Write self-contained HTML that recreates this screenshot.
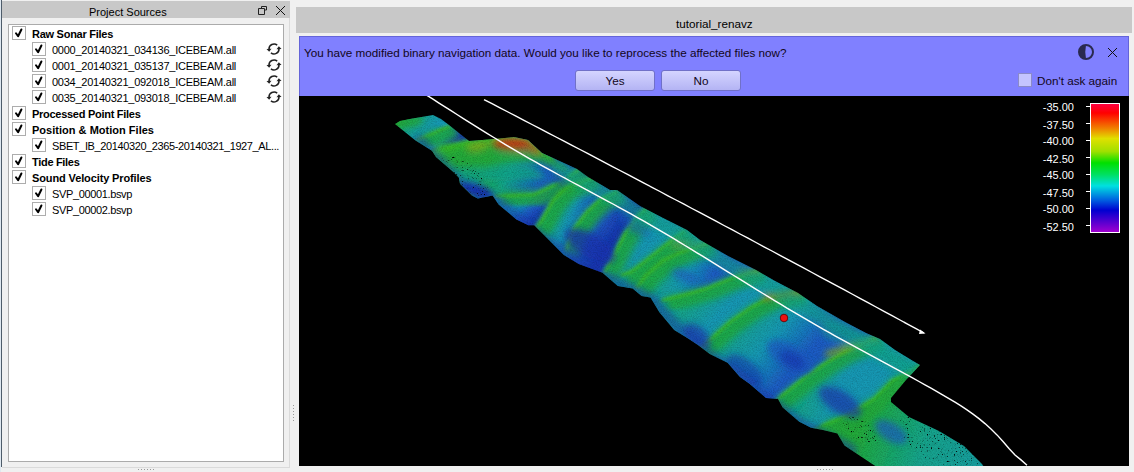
<!DOCTYPE html>
<html><head><meta charset="utf-8">
<style>
*{margin:0;padding:0;box-sizing:border-box}
html,body{width:1134px;height:472px;overflow:hidden;background:#f0f0f0;font-family:"Liberation Sans",sans-serif;font-size:11px;color:#000}
.a{position:absolute}
.t{position:absolute;white-space:nowrap;line-height:12px}
.cb{position:absolute;width:14px;height:14px;border:1px solid #adadad;background:#fff}
.cb svg{position:absolute;left:1px;top:1px}
.b{font-weight:bold}
</style></head><body>
<!-- left edge -->
<div class="a" style="left:0;top:0;width:1px;height:472px;background:#dfe8f0"></div>
<div class="a" style="left:1px;top:0;width:1px;height:467px;background:#4e5c6a"></div>
<!-- left panel header -->
<div class="a" style="left:2px;top:1px;width:288px;height:17px;background:#c8c8c8"></div>
<div class="t" style="left:89px;top:6px;font-size:11px">Project Sources</div>
<svg class="a" style="left:257px;top:5px" width="12" height="11" viewBox="0 0 12 11">
<path d="M1.5 3.5h6v6h-6z M4.5 3.5v-2h5v3.5h-2" fill="none" stroke="#222" stroke-width="1"/></svg>
<svg class="a" style="left:275px;top:5px" width="11" height="11" viewBox="0 0 11 11">
<path d="M1 1L10 10M10 1L1 10" stroke="#111" stroke-width="1"/></svg>
<!-- tree box -->
<div class="a" style="left:8px;top:24px;width:276px;height:438px;background:#fff;border:1px solid #ababab"></div>
<div class="a" style="left:289px;top:18px;width:1px;height:450px;background:#dadada"></div>
<div class="a" style="left:2px;top:467px;width:288px;height:1px;background:#dadada"></div>
<svg width="0" height="0" style="position:absolute"><defs><symbol id="sync" viewBox="0 0 16 16"><g stroke="#222" stroke-width="1.5" fill="none"><path d="M11.21 4.17A5.0 5.0 0 0 0 3.01 8.26"/><path d="M4.92 11.94A5.0 5.0 0 0 0 12.99 7.74"/></g><g fill="#222"><path d="M3.14 10.86L0.49 7.99L5.48 7.73z"/><path d="M12.86 5.14L15.51 8.01L10.52 8.27z"/></g></symbol></defs></svg>
<div class="cb" style="left:12px;top:26px"><svg width="11" height="11" viewBox="0 0 11 11"><path d="M2 5.3L4.1 8.3L7.4 1.5" fill="none" stroke="#000" stroke-width="2" stroke-linecap="round" stroke-linejoin="round"/></svg></div>
<div class="t b" style="left:32px;top:28px;letter-spacing:-0.266px">Raw Sonar Files</div>
<div class="cb" style="left:32px;top:42px"><svg width="11" height="11" viewBox="0 0 11 11"><path d="M2 5.3L4.1 8.3L7.4 1.5" fill="none" stroke="#000" stroke-width="2" stroke-linecap="round" stroke-linejoin="round"/></svg></div>
<div class="t" style="left:52px;top:44px;letter-spacing:-0.251px">0000_20140321_034136_ICEBEAM.all</div>
<svg class="a" style="left:266px;top:41px" width="16" height="16" viewBox="0 0 16 16"><use href="#sync"/></svg>
<div class="cb" style="left:32px;top:58px"><svg width="11" height="11" viewBox="0 0 11 11"><path d="M2 5.3L4.1 8.3L7.4 1.5" fill="none" stroke="#000" stroke-width="2" stroke-linecap="round" stroke-linejoin="round"/></svg></div>
<div class="t" style="left:52px;top:60px;letter-spacing:-0.251px">0001_20140321_035137_ICEBEAM.all</div>
<svg class="a" style="left:266px;top:57px" width="16" height="16" viewBox="0 0 16 16"><use href="#sync"/></svg>
<div class="cb" style="left:32px;top:74px"><svg width="11" height="11" viewBox="0 0 11 11"><path d="M2 5.3L4.1 8.3L7.4 1.5" fill="none" stroke="#000" stroke-width="2" stroke-linecap="round" stroke-linejoin="round"/></svg></div>
<div class="t" style="left:52px;top:76px;letter-spacing:-0.251px">0034_20140321_092018_ICEBEAM.all</div>
<svg class="a" style="left:266px;top:73px" width="16" height="16" viewBox="0 0 16 16"><use href="#sync"/></svg>
<div class="cb" style="left:32px;top:90px"><svg width="11" height="11" viewBox="0 0 11 11"><path d="M2 5.3L4.1 8.3L7.4 1.5" fill="none" stroke="#000" stroke-width="2" stroke-linecap="round" stroke-linejoin="round"/></svg></div>
<div class="t" style="left:52px;top:92px;letter-spacing:-0.251px">0035_20140321_093018_ICEBEAM.all</div>
<svg class="a" style="left:266px;top:89px" width="16" height="16" viewBox="0 0 16 16"><use href="#sync"/></svg>
<div class="cb" style="left:12px;top:106px"><svg width="11" height="11" viewBox="0 0 11 11"><path d="M2 5.3L4.1 8.3L7.4 1.5" fill="none" stroke="#000" stroke-width="2" stroke-linecap="round" stroke-linejoin="round"/></svg></div>
<div class="t b" style="left:32px;top:108px;letter-spacing:-0.278px">Processed Point Files</div>
<div class="cb" style="left:12px;top:122px"><svg width="11" height="11" viewBox="0 0 11 11"><path d="M2 5.3L4.1 8.3L7.4 1.5" fill="none" stroke="#000" stroke-width="2" stroke-linecap="round" stroke-linejoin="round"/></svg></div>
<div class="t b" style="left:32px;top:124px;letter-spacing:0.017px">Position &amp; Motion Files</div>
<div class="cb" style="left:32px;top:138px"><svg width="11" height="11" viewBox="0 0 11 11"><path d="M2 5.3L4.1 8.3L7.4 1.5" fill="none" stroke="#000" stroke-width="2" stroke-linecap="round" stroke-linejoin="round"/></svg></div>
<div class="t" style="left:52px;top:140px;letter-spacing:-0.386px">SBET_IB_20140320_2365-20140321_1927_AL...</div>
<div class="cb" style="left:12px;top:154px"><svg width="11" height="11" viewBox="0 0 11 11"><path d="M2 5.3L4.1 8.3L7.4 1.5" fill="none" stroke="#000" stroke-width="2" stroke-linecap="round" stroke-linejoin="round"/></svg></div>
<div class="t b" style="left:32px;top:156px;letter-spacing:-0.305px">Tide Files</div>
<div class="cb" style="left:12px;top:170px"><svg width="11" height="11" viewBox="0 0 11 11"><path d="M2 5.3L4.1 8.3L7.4 1.5" fill="none" stroke="#000" stroke-width="2" stroke-linecap="round" stroke-linejoin="round"/></svg></div>
<div class="t b" style="left:32px;top:172px;letter-spacing:-0.120px">Sound Velocity Profiles</div>
<div class="cb" style="left:32px;top:186px"><svg width="11" height="11" viewBox="0 0 11 11"><path d="M2 5.3L4.1 8.3L7.4 1.5" fill="none" stroke="#000" stroke-width="2" stroke-linecap="round" stroke-linejoin="round"/></svg></div>
<div class="t" style="left:52px;top:188px;letter-spacing:-0.358px">SVP_00001.bsvp</div>
<div class="cb" style="left:32px;top:202px"><svg width="11" height="11" viewBox="0 0 11 11"><path d="M2 5.3L4.1 8.3L7.4 1.5" fill="none" stroke="#000" stroke-width="2" stroke-linecap="round" stroke-linejoin="round"/></svg></div>
<div class="t" style="left:52px;top:204px;letter-spacing:-0.358px">SVP_00002.bsvp</div>

<!-- splitter dots -->
<svg class="a" style="left:137px;top:469px" width="20" height="2"><g fill="#9a9a9a"><rect x="1" y="0" width="1" height="1"/><rect x="4" y="0" width="1" height="1"/><rect x="7" y="0" width="1" height="1"/><rect x="10" y="0" width="1" height="1"/><rect x="13" y="0" width="1" height="1"/><rect x="16" y="0" width="1" height="1"/></g></svg>
<svg class="a" style="left:293px;top:404px" width="2" height="20"><g fill="#9a9a9a"><rect x="0" y="1" width="1" height="1"/><rect x="0" y="4" width="1" height="1"/><rect x="0" y="7" width="1" height="1"/><rect x="0" y="10" width="1" height="1"/><rect x="0" y="13" width="1" height="1"/><rect x="0" y="16" width="1" height="1"/></g></svg>
<svg class="a" style="left:816px;top:469px" width="20" height="2"><g fill="#9a9a9a"><rect x="1" y="0" width="1" height="1"/><rect x="4" y="0" width="1" height="1"/><rect x="7" y="0" width="1" height="1"/><rect x="10" y="0" width="1" height="1"/><rect x="13" y="0" width="1" height="1"/><rect x="16" y="0" width="1" height="1"/></g></svg>

<!-- right view header -->
<div class="a" style="left:296px;top:7px;width:836px;height:26px;background:#c8c8c8"></div>
<div class="t" style="left:676px;top:18px;font-size:11.7px">tutorial_renavz</div>

<!-- viewport -->
<div class="a" style="left:299px;top:96px;width:830px;height:370px;background:#000;overflow:hidden" id="vp"></div>
<svg class="a" style="left:299px;top:96px" width="830" height="370" viewBox="299 96 830 370">
<defs><clipPath id="sw"><polygon points="395,124 400,121 410,119 433,115 441,119 449,125 469,141 482,140 500,138.6 514,137 528,140 542,153 577,169 588,177 610,190 617,190 640,206 663,218 687,230 700,240 728,256 756,270 775,281 798,293 817,306 845,322 866,333 880,339 895,350 913,361 920,365 906,380 891,398 891,402 909,417 939,431 964,446 982,464 984,467 877,467 873,464.5 858.7,455 844.5,445.5 837.3,433.6 823,430 811,427.7 799.3,421.7 782.7,407.5 778,399 766,398 749.5,383.7 740,377 727.6,362.8 709.8,353.9 698,345 689,339 674.2,330 659.4,312.3 650.5,297.5 641.6,296 632.6,288.6 617.8,286 602.5,272.8 578.7,263.9 563.9,255 549,240.1 534.2,225.3 528.3,225.3 516.4,219.4 498.6,204.5 492.6,195.6 477.8,198.6 471.9,195.6 460,183.7 458.8,177.4 453.7,172.3 436,157 432,150.7 415.5,140.5"/></clipPath>
<filter id="bl" x="-5%" y="-5%" width="110%" height="110%"><feGaussianBlur stdDeviation="1.5"/></filter>
<filter id="bl2" x="-5%" y="-5%" width="110%" height="110%"><feGaussianBlur stdDeviation="3"/></filter>
<filter id="bl3" x="-20%" y="-20%" width="140%" height="140%"><feGaussianBlur stdDeviation="3"/></filter>
<linearGradient id="gA0" gradientUnits="userSpaceOnUse" x1="406.5" y1="112.5" x2="432.0" y2="132.5"><stop offset="0" stop-color="#22aa3a"/><stop offset="0.3" stop-color="#12a48c"/><stop offset="1" stop-color="#1498b4"/></linearGradient>
<linearGradient id="gRA" gradientUnits="userSpaceOnUse" x1="432.0" y1="132.5" x2="451.4" y2="145.8"><stop offset="0" stop-color="#12a48c"/><stop offset="0.5" stop-color="#1498b4"/><stop offset="1" stop-color="#1836b0"/></linearGradient>
<linearGradient id="gRB" gradientUnits="userSpaceOnUse" x1="451.4" y1="145.8" x2="541.0" y2="185.0"><stop offset="0" stop-color="#22aa3a"/><stop offset="0.4" stop-color="#22aa3a"/><stop offset="0.65" stop-color="#12a48c"/><stop offset="1" stop-color="#1c5cc4"/></linearGradient>
<linearGradient id="gR3" gradientUnits="userSpaceOnUse" x1="541.0" y1="185.0" x2="556.6" y2="202.6"><stop offset="0" stop-color="#1498b4"/><stop offset="0.5" stop-color="#1c5cc4"/><stop offset="1" stop-color="#1836b0"/></linearGradient>
<linearGradient id="gR4" gradientUnits="userSpaceOnUse" x1="556.6" y1="202.6" x2="588.0" y2="215.6"><stop offset="0" stop-color="#12a48c"/><stop offset="0.5" stop-color="#1498b4"/><stop offset="1" stop-color="#1c5cc4"/></linearGradient>
<linearGradient id="gR5" gradientUnits="userSpaceOnUse" x1="588.0" y1="215.6" x2="621.5" y2="241.0"><stop offset="0" stop-color="#12a48c"/><stop offset="0.3" stop-color="#1c5cc4"/><stop offset="0.8" stop-color="#1836b0"/></linearGradient>
<linearGradient id="gR6" gradientUnits="userSpaceOnUse" x1="621.5" y1="241.0" x2="650.5" y2="254.7"><stop offset="0" stop-color="#12a48c"/><stop offset="0.4" stop-color="#1498b4"/><stop offset="1" stop-color="#1498b4"/></linearGradient>
<linearGradient id="gR7" gradientUnits="userSpaceOnUse" x1="650.5" y1="254.7" x2="665.6" y2="263.6"><stop offset="0" stop-color="#12a48c"/><stop offset="0.4" stop-color="#12a48c"/><stop offset="1" stop-color="#1498b4"/></linearGradient>
<linearGradient id="gR8" gradientUnits="userSpaceOnUse" x1="665.6" y1="263.6" x2="707.5" y2="285.8"><stop offset="0" stop-color="#12a48c"/><stop offset="0.5" stop-color="#1498b4"/><stop offset="1" stop-color="#1c5cc4"/></linearGradient>
<linearGradient id="gR9" gradientUnits="userSpaceOnUse" x1="707.5" y1="285.8" x2="741.8" y2="317.9"><stop offset="0" stop-color="#12a48c"/><stop offset="0.6" stop-color="#1498b4"/><stop offset="1" stop-color="#1498b4"/></linearGradient>
<linearGradient id="gR10" gradientUnits="userSpaceOnUse" x1="741.8" y1="317.9" x2="809.3" y2="378.0"><stop offset="0" stop-color="#12a48c"/><stop offset="0.4" stop-color="#1498b4"/><stop offset="0.8" stop-color="#1c5cc4"/></linearGradient>
<linearGradient id="gR11" gradientUnits="userSpaceOnUse" x1="809.3" y1="378.0" x2="869.8" y2="396.6"><stop offset="0" stop-color="#12a48c"/><stop offset="0.5" stop-color="#1498b4"/><stop offset="1" stop-color="#1498b4"/></linearGradient>
<linearGradient id="gR12" gradientUnits="userSpaceOnUse" x1="869.8" y1="396.6" x2="1050.0" y2="460.0"><stop offset="0" stop-color="#22aa3a"/><stop offset="0.35" stop-color="#12a48c"/><stop offset="1" stop-color="#1498b4"/></linearGradient>
<filter id="noise" x="380" y="100" width="620" height="370" filterUnits="userSpaceOnUse"><feTurbulence type="fractalNoise" baseFrequency="0.8" numOctaves="2" seed="7" result="n"/><feColorMatrix in="n" type="matrix" values="0 0 0 0 0  0 0 0 0 0  0 0 0 0 0  -1.2 0 0 0 0.75"/></filter>
<filter id="speck" x="380" y="100" width="620" height="370" filterUnits="userSpaceOnUse"><feTurbulence type="fractalNoise" baseFrequency="0.7" numOctaves="1" seed="11" result="n"/><feColorMatrix in="n" type="matrix" values="0 0 0 0 0  0 0 0 0 0  0 0 0 0 0  -9 0 0 0 3.2"/></filter>
<clipPath id="spk"><ellipse cx="462" cy="178" rx="30" ry="16" transform="rotate(35 462 178)"/><ellipse cx="940" cy="446" rx="48" ry="18" transform="rotate(32 940 446)"/><ellipse cx="860" cy="430" rx="20" ry="10" transform="rotate(32 860 430)"/></clipPath>
</defs>
<g clip-path="url(#sw)">
<g filter="url(#bl)"><polygon points="469.2,82.9 433.0,100.0 380.0,125.0 343.8,142.1 378.4,156.1 415.0,140.0 449.0,125.0 485.6,108.9" fill="url(#gA0)"/>
<polygon points="485.6,108.9 449.0,125.0 415.0,140.0 378.4,156.1 393.6,160.2 432.4,150.5 470.5,141.0 509.3,131.3" fill="url(#gRA)"/>
<polygon points="509.3,131.3 470.5,141.0 432.4,150.5 393.6,160.2 453.0,198.0 493.0,196.0 533.0,194.0 560.5,181.0 577.5,169.0 610.2,145.9" fill="url(#gRB)"/>
<polygon points="610.2,145.9 577.5,169.0 560.5,181.0 533.0,194.0 493.0,196.0 453.0,198.0 509.5,262.3 533.0,230.0 541.0,219.0 552.0,200.0 565.0,187.0 592.0,177.0 629.5,163.1" fill="url(#gR3)"/>
<polygon points="629.5,163.1 592.0,177.0 565.0,187.0 552.0,200.0 541.0,219.0 533.0,230.0 509.5,262.3 551.3,287.6 565.0,250.0 573.0,228.0 586.0,211.0 600.0,198.0 616.0,191.0 652.6,175.0" fill="url(#gR4)"/>
<polygon points="652.6,175.0 616.0,191.0 600.0,198.0 586.0,211.0 573.0,228.0 565.0,250.0 551.3,287.6 581.6,305.8 603.0,272.0 608.7,263.0 615.0,250.5 623.6,233.6 634.0,218.7 644.7,208.0 673.0,179.7" fill="url(#gR5)"/>
<polygon points="673.0,179.7 644.7,208.0 634.0,218.7 623.6,233.6 615.0,250.5 608.7,263.0 603.0,272.0 581.6,305.8 582.8,289.7 620.0,275.0 630.6,270.8 649.7,256.0 668.7,241.0 683.6,230.6 716.4,207.7" fill="url(#gR6)"/>
<polygon points="716.4,207.7 683.6,230.6 668.7,241.0 649.7,256.0 630.6,270.8 620.0,275.0 582.8,289.7 610.6,319.7 635.0,288.0 645.0,275.0 662.0,260.0 679.0,252.0 707.0,243.0 745.1,230.8" fill="url(#gR7)"/>
<polygon points="745.1,230.8 707.0,243.0 679.0,252.0 662.0,260.0 645.0,275.0 635.0,288.0 610.6,319.7 621.2,309.9 660.0,300.0 683.6,294.0 705.0,288.0 732.0,277.0 757.0,270.0 795.5,259.2" fill="url(#gR8)"/>
<polygon points="795.5,259.2 757.0,270.0 732.0,277.0 705.0,288.0 683.6,294.0 660.0,300.0 621.2,309.9 662.4,379.1 692.7,353.0 709.7,338.4 728.7,321.4 750.0,306.6 771.0,296.0 798.6,292.0 838.2,286.3" fill="url(#gR9)"/>
<polygon points="838.2,286.3 798.6,292.0 771.0,296.0 750.0,306.6 728.7,321.4 709.7,338.4 692.7,353.0 662.4,379.1 751.3,457.2 766.0,420.0 772.7,403.0 781.0,394.7 802.4,377.8 823.6,363.0 844.7,350.3 874.4,337.5 911.1,321.7" fill="url(#gR10)"/>
<polygon points="911.1,321.7 874.4,337.5 844.7,350.3 823.6,363.0 802.4,377.8 781.0,394.7 772.7,403.0 766.0,420.0 751.3,457.2 782.9,439.9 820.0,425.0 845.0,415.0 873.0,398.0 891.0,380.0 920.0,365.0 955.5,346.6" fill="url(#gR11)"/>
<polygon points="955.5,346.6 920.0,365.0 891.0,380.0 873.0,398.0 845.0,415.0 820.0,425.0 782.9,439.9 968.8,525.0 1000.0,500.0 1100.0,420.0 1131.2,395.0" fill="url(#gR12)"/>
<polyline points="456,129 422,144" fill="none" stroke="#22aa3a" stroke-width="16" stroke-linejoin="round" opacity="0.8" filter="url(#bl3)"/>
<polyline points="450,125.5 416,140.5" fill="none" stroke="#34b82c" stroke-width="3.5" stroke-linejoin="round"/>
<polyline points="477.5,145 439.4,154.5" fill="none" stroke="#22aa3a" stroke-width="16" stroke-linejoin="round" opacity="0.8" filter="url(#bl3)"/>
<polyline points="471.5,141.5 433.4,151.0" fill="none" stroke="#34b82c" stroke-width="3.5" stroke-linejoin="round"/>
<polyline points="584.5,173 567.5,185 540,198 500,200" fill="none" stroke="#22aa3a" stroke-width="16" stroke-linejoin="round" opacity="0.8" filter="url(#bl3)"/>
<polyline points="578.5,169.5 561.5,181.5 534,194.5 494,196.5" fill="none" stroke="#34b82c" stroke-width="3.5" stroke-linejoin="round"/>
<polyline points="599,181 572,191 559,204 548,223 540,234" fill="none" stroke="#22aa3a" stroke-width="16" stroke-linejoin="round" opacity="0.8" filter="url(#bl3)"/>
<polyline points="593,177.5 566,187.5 553,200.5 542,219.5 534,230.5" fill="none" stroke="#34b82c" stroke-width="3.5" stroke-linejoin="round"/>
<polyline points="623,195 607,202 593,215 580,232 572,254" fill="none" stroke="#22aa3a" stroke-width="16" stroke-linejoin="round" opacity="0.8" filter="url(#bl3)"/>
<polyline points="617,191.5 601,198.5 587,211.5 574,228.5 566,250.5" fill="none" stroke="#34b82c" stroke-width="3.5" stroke-linejoin="round"/>
<polyline points="651.7,212 641,222.7 630.6,237.6 622,254.5 615.7,267 610,276" fill="none" stroke="#22aa3a" stroke-width="16" stroke-linejoin="round" opacity="0.8" filter="url(#bl3)"/>
<polyline points="645.7,208.5 635,219.2 624.6,234.1 616,251.0 609.7,263.5 604,272.5" fill="none" stroke="#34b82c" stroke-width="3.5" stroke-linejoin="round"/>
<polyline points="690.6,234.6 675.7,245 656.7,260 637.6,274.8 627,279" fill="none" stroke="#22aa3a" stroke-width="16" stroke-linejoin="round" opacity="0.8" filter="url(#bl3)"/>
<polyline points="684.6,231.1 669.7,241.5 650.7,256.5 631.6,271.3 621,275.5" fill="none" stroke="#34b82c" stroke-width="3.5" stroke-linejoin="round"/>
<polyline points="714,247 686,256 669,264 652,279 642,292" fill="none" stroke="#22aa3a" stroke-width="16" stroke-linejoin="round" opacity="0.8" filter="url(#bl3)"/>
<polyline points="708,243.5 680,252.5 663,260.5 646,275.5 636,288.5" fill="none" stroke="#34b82c" stroke-width="3.5" stroke-linejoin="round"/>
<polyline points="764,274 739,281 712,292 690.6,298 667,304" fill="none" stroke="#22aa3a" stroke-width="16" stroke-linejoin="round" opacity="0.8" filter="url(#bl3)"/>
<polyline points="758,270.5 733,277.5 706,288.5 684.6,294.5 661,300.5" fill="none" stroke="#34b82c" stroke-width="3.5" stroke-linejoin="round"/>
<polyline points="805.6,296 778,300 757,310.6 735.7,325.4 716.7,342.4 699.7,357" fill="none" stroke="#22aa3a" stroke-width="16" stroke-linejoin="round" opacity="0.8" filter="url(#bl3)"/>
<polyline points="799.6,292.5 772,296.5 751,307.1 729.7,321.9 710.7,338.9 693.7,353.5" fill="none" stroke="#34b82c" stroke-width="3.5" stroke-linejoin="round"/>
<polyline points="881.4,341.5 851.7,354.3 830.6,367 809.4,381.8 788,398.7 779.7,407 773,424" fill="none" stroke="#22aa3a" stroke-width="16" stroke-linejoin="round" opacity="0.8" filter="url(#bl3)"/>
<polyline points="875.4,338.0 845.7,350.8 824.6,363.5 803.4,378.3 782,395.2 773.7,403.5 767,420.5" fill="none" stroke="#34b82c" stroke-width="3.5" stroke-linejoin="round"/>
<polyline points="927,369 898,384 880,402 852,419 827,429" fill="none" stroke="#22aa3a" stroke-width="16" stroke-linejoin="round" opacity="0.8" filter="url(#bl3)"/>
<polyline points="921,365.5 892,380.5 874,398.5 846,415.5 821,425.5" fill="none" stroke="#34b82c" stroke-width="3.5" stroke-linejoin="round"/></g>
<g filter="url(#bl2)"><polyline points="432,152 470,143 500,140 526,139 534,146 552,156" fill="none" stroke="#34b82c" stroke-width="7" stroke-linecap="round" stroke-linejoin="round" opacity="1"/>
<polyline points="436,160 540,157 565,168" fill="none" stroke="#22aa3a" stroke-width="8" stroke-linecap="round" stroke-linejoin="round" opacity="0.9"/>
<ellipse cx="512" cy="143" rx="20" ry="5" transform="rotate(0 512 143)" fill="#c02a12" opacity="1"/>
<ellipse cx="514" cy="149" rx="20" ry="3" transform="rotate(5 514 149)" fill="#aa6c18" opacity="0.8"/>
<ellipse cx="478" cy="147" rx="12" ry="4" transform="rotate(-10 478 147)" fill="#88aa18" opacity="0.8"/>
<ellipse cx="534" cy="149" rx="8" ry="4" transform="rotate(35 534 149)" fill="#aa6c18" opacity="0.9"/>
<ellipse cx="410" cy="122" rx="14" ry="5" transform="rotate(-12 410 122)" fill="#22aa3a" opacity="0.9"/>
<polygon points="445,168 530,166 548,178 460,184" fill="#12a48c" opacity="0.8"/>
<ellipse cx="476" cy="190" rx="18" ry="7" transform="rotate(20 476 190)" fill="#1836b0" opacity="1"/>
<ellipse cx="560" cy="178" rx="9" ry="5" transform="rotate(30 560 178)" fill="#1836b0" opacity="0.9"/>
<ellipse cx="590" cy="246" rx="28" ry="12" transform="rotate(30 590 246)" fill="#1836b0" opacity="0.8"/>
<polyline points="673,246 705,243" fill="none" stroke="#88aa18" stroke-width="4" stroke-linecap="round" stroke-linejoin="round" opacity="0.7"/>
<polyline points="740,272 757,270" fill="none" stroke="#aa6c18" stroke-width="4" stroke-linecap="round" stroke-linejoin="round" opacity="0.6"/>
<polyline points="765,298 798,292" fill="none" stroke="#aa6c18" stroke-width="5" stroke-linecap="round" stroke-linejoin="round" opacity="0.8"/>
<polyline points="828,354 874,339" fill="none" stroke="#88aa18" stroke-width="6" stroke-linecap="round" stroke-linejoin="round" opacity="0.85"/>
<ellipse cx="635" cy="225" rx="18" ry="8" transform="rotate(32 635 225)" fill="#1c5cc4" opacity="0.5"/>
<ellipse cx="685" cy="276" rx="14" ry="6" transform="rotate(20 685 276)" fill="#1c5cc4" opacity="0.6"/>
<ellipse cx="697" cy="336" rx="16" ry="9" transform="rotate(40 697 336)" fill="#1836b0" opacity="0.7"/>
<ellipse cx="790" cy="357" rx="26" ry="12" transform="rotate(32 790 357)" fill="#1c5cc4" opacity="0.75"/>
<ellipse cx="745" cy="370" rx="22" ry="10" transform="rotate(40 745 370)" fill="#1836b0" opacity="0.6"/>
<ellipse cx="792" cy="360" rx="14" ry="8" transform="rotate(32 792 360)" fill="#1836b0" opacity="0.6"/>
<ellipse cx="840" cy="402" rx="24" ry="11" transform="rotate(32 840 402)" fill="#1836b0" opacity="0.7"/>
<ellipse cx="891" cy="432" rx="18" ry="9" transform="rotate(32 891 432)" fill="#1c5cc4" opacity="0.7"/>
<polyline points="560,170 588,185 617,198 640,214 687,238 728,264 775,289 817,314 866,341 913,369" fill="none" stroke="#12a48c" stroke-width="16" stroke-linecap="round" stroke-linejoin="round" opacity="0.6"/>
<polyline points="830,330 866,345 905,368" fill="none" stroke="#12a48c" stroke-width="18" stroke-linecap="round" stroke-linejoin="round" opacity="0.5"/>
<polyline points="420,142 460,185 500,205 540,238 600,276 650,300 690,342 740,378 800,425 850,450" fill="none" stroke="#1836b0" stroke-width="14" stroke-linecap="round" stroke-linejoin="round" opacity="0.5"/></g>
<rect x="380" y="100" width="620" height="370" fill="#000" filter="url(#noise)" opacity="0.3"/>
<g clip-path="url(#spk)"><rect x="380" y="100" width="620" height="370" fill="#000" filter="url(#speck)"/></g>
</g>
<polyline points="427,95.4 433,99.2 439,103.1 445,106.9 451,110.7 457,114.5 463,118.3 469,122.1 475,125.8 481,129.6 487,133.3 493,137.0 499,140.7 505,144.3 511,147.9 517,151.4 523,154.9 529,158.3 535,161.7 541,165.1 547,168.4 553,171.7 559,175.0 565,178.2 571,181.5 577,184.7 583,187.9 589,191.1 595,194.3 601,197.6 607,200.8 613,204.0 619,207.3 625,210.6 631,213.9 637,217.3 643,220.7 649,224.1 655,227.6 661,231.1 667,234.7 673,238.2 679,241.8 685,245.5 691,249.1 697,252.8 703,256.4 709,260.1 715,263.8 721,267.6 727,271.3 733,275.0 739,278.7 745,282.4 751,286.1 757,289.8 763,293.5 769,297.2 775,300.8 781,304.4 787,308.1 793,311.6 799,315.2 805,318.7 811,322.2 817,325.6 823,329.1 829,332.4 835,335.8 841,339.1 847,342.4 853,345.6 859,348.9 865,352.1 871,355.4 877,358.6 883,361.8 889,365.1 895,368.3 901,371.6 907,374.9 913,378.2 919,381.5 925,384.8 931,388.2 937,391.6 943,395.1 949,398.6 955,402.2 961,405.9 967,409.9 973,414.1 979,418.6 985,423.6 991,429.0 997,434.9 1003,441.5 1009,448.5 1015,455.0 1021,459.9 1027,465.2 1027,465.2" fill="none" stroke="#fff" stroke-width="1.4"/>
<polyline points="484,99.6 492,103.7 500,107.9 508,112.0 516,116.2 524,120.3 532,124.5 540,128.6 548,132.8 556,137.0 564,141.1 572,145.3 580,149.5 588,153.7 596,157.9 604,162.1 612,166.3 620,170.5 628,174.7 636,178.9 644,183.1 652,187.3 660,191.5 668,195.8 676,200.0 684,204.2 692,208.5 700,212.7 708,216.9 716,221.2 724,225.5 732,229.7 740,234.0 748,238.2 756,242.5 764,246.8 772,251.0 780,255.3 788,259.6 796,263.9 804,268.2 812,272.5 820,276.8 828,281.1 836,285.4 844,289.7 852,294.0 860,298.3 868,302.7 876,307.0 884,311.3 892,315.7 900,320.0 908,324.3 916,328.7 924,333.0 924,333.0" fill="none" stroke="#fff" stroke-width="1.4"/>
<path d="M920 329.5L925.5 333.5L919 334z" fill="#fff"/>
<circle cx="784" cy="318" r="3.8" fill="#ee1010" stroke="#500" stroke-width="0.8"/>
</svg>
<div class="t" style="left:1040px;top:101px;width:34px;text-align:right;color:#fff;font-size:11px">-35.00</div>
<div class="a" style="left:1086px;top:106px;width:4px;height:1px;background:#fff"></div>
<div class="t" style="left:1040px;top:119px;width:34px;text-align:right;color:#fff;font-size:11px">-37.50</div>
<div class="a" style="left:1086px;top:123px;width:4px;height:1px;background:#fff"></div>
<div class="t" style="left:1040px;top:135px;width:34px;text-align:right;color:#fff;font-size:11px">-40.00</div>
<div class="a" style="left:1086px;top:140px;width:4px;height:1px;background:#fff"></div>
<div class="t" style="left:1040px;top:153px;width:34px;text-align:right;color:#fff;font-size:11px">-42.50</div>
<div class="a" style="left:1086px;top:157px;width:4px;height:1px;background:#fff"></div>
<div class="t" style="left:1040px;top:169px;width:34px;text-align:right;color:#fff;font-size:11px">-45.00</div>
<div class="a" style="left:1086px;top:174px;width:4px;height:1px;background:#fff"></div>
<div class="t" style="left:1040px;top:187px;width:34px;text-align:right;color:#fff;font-size:11px">-47.50</div>
<div class="a" style="left:1086px;top:191px;width:4px;height:1px;background:#fff"></div>
<div class="t" style="left:1040px;top:203px;width:34px;text-align:right;color:#fff;font-size:11px">-50.00</div>
<div class="a" style="left:1086px;top:208px;width:4px;height:1px;background:#fff"></div>
<div class="t" style="left:1040px;top:221px;width:34px;text-align:right;color:#fff;font-size:11px">-52.50</div>
<div class="a" style="left:1086px;top:225px;width:4px;height:1px;background:#fff"></div>
<div class="a" style="left:1090px;top:103px;width:30px;height:130px;border:1px solid #fff;background:linear-gradient(#ff0040 0%,#ff0000 7%,#f08000 19%,#e0e000 27%,#a0e000 37%,#00e000 46%,#00e060 55%,#00e0e0 64%,#0060e0 75%,#0000d0 83%,#a000d0 100%)"></div>

<!-- dialog -->
<div class="a" style="left:299px;top:36px;width:830px;height:60px;background:#8080ff;border:1px solid #6464d8;border-bottom:none"></div>
<div class="t" style="left:304px;top:47px;font-size:11.7px;color:#12061a">You have modified binary navigation data. Would you like to reprocess the affected files now?</div>
<div class="a" style="left:575px;top:70px;width:80px;height:21px;border:1px solid #7070c8;border-radius:3px;background:linear-gradient(#d4d4ff,#b4b4f4)"></div>
<div class="t" style="left:575px;top:75px;width:80px;text-align:center;font-size:11.7px;color:#12061a">Yes</div>
<div class="a" style="left:661px;top:70px;width:80px;height:21px;border:1px solid #7070c8;border-radius:3px;background:linear-gradient(#d4d4ff,#b4b4f4)"></div>
<div class="t" style="left:661px;top:75px;width:80px;text-align:center;font-size:11.7px;color:#12061a">No</div>
<svg class="a" style="left:1077px;top:43px" width="18" height="18" viewBox="0 0 18 18">
<circle cx="9" cy="9" r="7" fill="none" stroke="#2a2a50" stroke-width="2"/>
<path d="M9 2 A7 7 0 0 0 9 16 Q7.5 9 9 2z" fill="#2a2a50"/></svg>
<svg class="a" style="left:1107px;top:47px" width="11" height="11" viewBox="0 0 11 11">
<path d="M1 1L10 10M10 1L1 10" stroke="#111" stroke-width="1"/></svg>
<div class="a" style="left:1018px;top:73px;width:14px;height:14px;border:1px solid #8a8ac8;background:#c4c4ff"></div>
<div class="t" style="left:1037px;top:75px;font-size:11.7px;color:#12061a">Don't ask again</div>
</body></html>
